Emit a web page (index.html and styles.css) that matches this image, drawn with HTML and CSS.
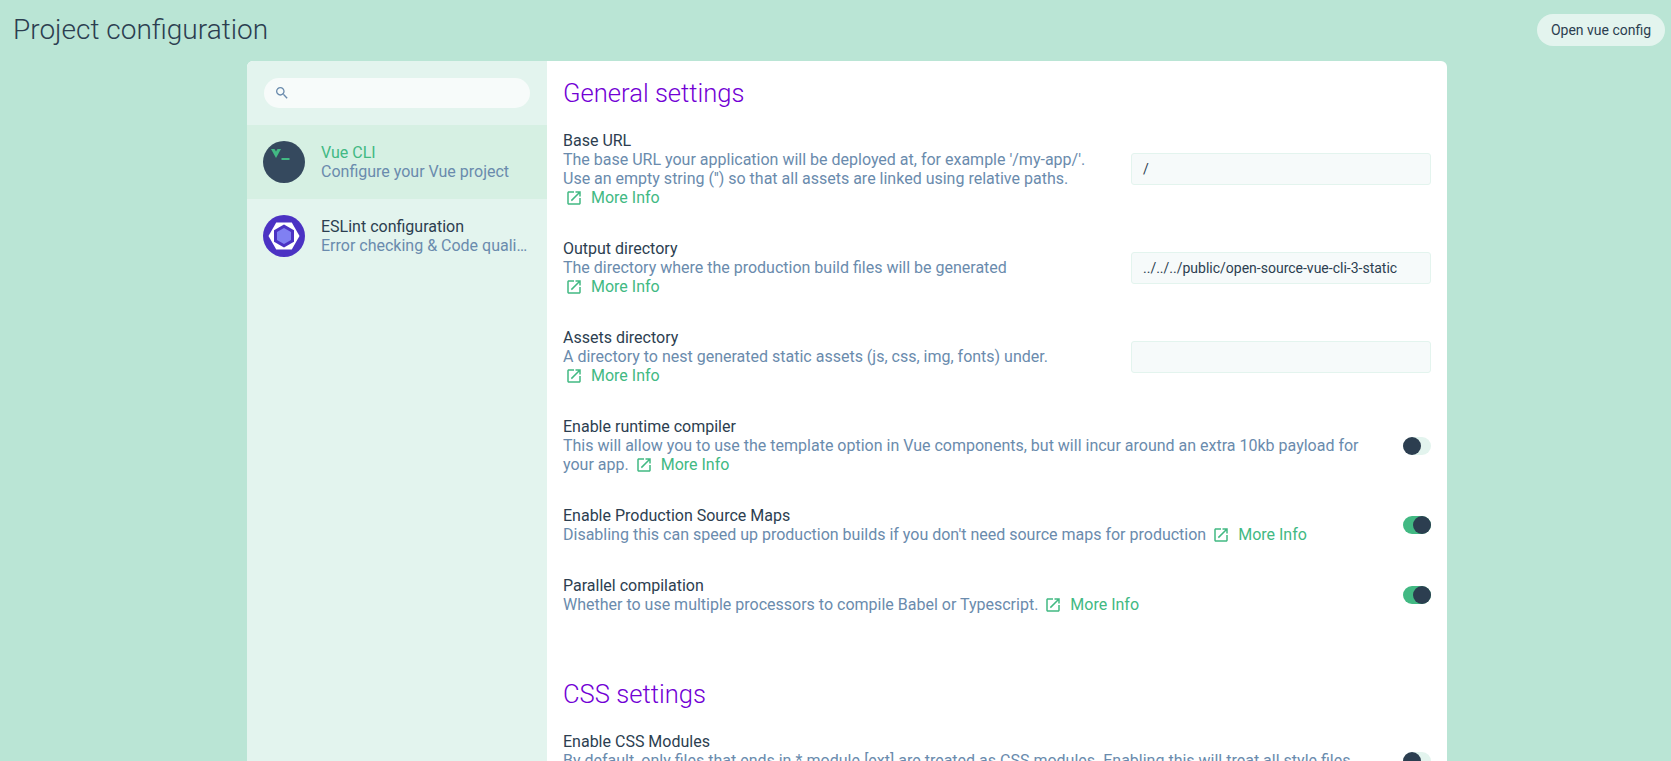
FILE: index.html
```html
<!DOCTYPE html>
<html lang="en">
<head>
    <meta charset="UTF-8">
    <title>Project configuration</title>
    <link rel="stylesheet" href="styles.css">
</head>
<body>

    <header class="top-bar">
        <h1 class="page-title">Project configuration</h1>
        <button class="btn-config">Open vue config</button>
    </header>

    <div class="panel">
        <aside class="sidebar">
            <div class="search-wrap">
                <div class="search">
                    <svg class="search-icon" viewBox="0 0 24 24"><path d="M15.5 14h-.79l-.28-.27C15.41 12.59 16 11.11 16 9.5 16 5.91 13.09 3 9.5 3S3 5.91 3 9.5 5.91 16 9.5 16c1.61 0 3.09-.59 4.23-1.57l.27.28v.79l5 4.99L20.49 19l-4.99-5zm-6 0C7.01 14 5 11.99 5 9.5S7.01 5 9.5 5 14 7.01 14 9.5 11.99 14 9.5 14z"/></svg>
                </div>
            </div>

            <div class="task selected">
                <svg class="avatar" viewBox="0 0 42 42">
                    <circle cx="21" cy="21" r="21" fill="#35495e"/>
                    <path d="M8 8h10l-5 9z" fill="#42b983"/>
                    <path d="M11.500 8h3l-1.500 2.500z" fill="#35495e"/>
                    <rect x="18.500" y="17" width="8" height="2" fill="#42b983"/>
                </svg>
                <div class="task-text">
                    <div class="task-name">Vue CLI</div>
                    <div class="task-desc">Configure your Vue project</div>
                </div>
            </div>

            <div class="task">
                <svg class="avatar" viewBox="0 0 42 42">
                    <circle cx="21" cy="21" r="21" fill="#4b32c3"/>
                    <path d="M5.500 21l7.750-13.500h15.500l7.750 13.500-7.750 13.500h-15.500z" fill="#fff"/>
                    <path d="M21 9.500l10 5.750v11.500l-10 5.750-10-5.750v-11.500z" fill="#4b32c3"/>
                    <path d="M21 13l7 4v8l-7 4-7-4v-8z" fill="#8080f2"/>
                </svg>
                <div class="task-text">
                    <div class="task-name">ESLint configuration</div>
                    <div class="task-desc">Error checking &amp; Code quality</div>
                </div>
            </div>
        </aside>

        <main class="content">
            <h2 class="section-title">General settings</h2>

            <div class="row">
                <div class="info info-narrow">
                    <div class="label">Base URL</div>
                    <div class="desc">The base URL your application will be deployed at, for example '/my-app/'.<br>Use an empty string ('') so that all assets are linked using relative paths.
                        <a class="more"><svg viewBox="0 0 24 24"><path d="M19 19H5V5h7V3H5c-1.110 0-2 .9-2 2v14c0 1.100.89 2 2 2h14c1.100 0 2-.9 2-2v-7h-2v7zM14 3v2h3.590l-9.830 9.830 1.410 1.410L19 6.410V10h2V3h-7z"/></svg>More Info</a>
                    </div>
                </div>
                <div class="field">/</div>
            </div>

            <div class="row">
                <div class="info info-narrow">
                    <div class="label">Output directory</div>
                    <div class="desc">The directory where the production build files will be generated
                        <a class="more"><svg viewBox="0 0 24 24"><path d="M19 19H5V5h7V3H5c-1.110 0-2 .9-2 2v14c0 1.100.89 2 2 2h14c1.100 0 2-.9 2-2v-7h-2v7zM14 3v2h3.590l-9.830 9.830 1.410 1.410L19 6.410V10h2V3h-7z"/></svg>More Info</a>
                    </div>
                </div>
                <div class="field">../../../public/open-source-vue-cli-3-static</div>
            </div>

            <div class="row">
                <div class="info info-narrow">
                    <div class="label">Assets directory</div>
                    <div class="desc">A directory to nest generated static assets (js, css, img, fonts) under.
                        <a class="more"><svg viewBox="0 0 24 24"><path d="M19 19H5V5h7V3H5c-1.110 0-2 .9-2 2v14c0 1.100.89 2 2 2h14c1.100 0 2-.9 2-2v-7h-2v7zM14 3v2h3.590l-9.830 9.830 1.410 1.410L19 6.410V10h2V3h-7z"/></svg>More Info</a>
                    </div>
                </div>
                <div class="field"></div>
            </div>

            <div class="row">
                <div class="info">
                    <div class="label">Enable runtime compiler</div>
                    <div class="desc">This will allow you to use the template option in Vue components, but will incur around an extra 10kb payload for your app.
                        <a class="more"><svg viewBox="0 0 24 24"><path d="M19 19H5V5h7V3H5c-1.110 0-2 .9-2 2v14c0 1.100.89 2 2 2h14c1.100 0 2-.9 2-2v-7h-2v7zM14 3v2h3.590l-9.830 9.830 1.410 1.410L19 6.410V10h2V3h-7z"/></svg>More Info</a>
                    </div>
                </div>
                <div class="toggle"></div>
            </div>

            <div class="row">
                <div class="info">
                    <div class="label">Enable Production Source Maps</div>
                    <div class="desc">Disabling this can speed up production builds if you don't need source maps for production
                        <a class="more"><svg viewBox="0 0 24 24"><path d="M19 19H5V5h7V3H5c-1.110 0-2 .9-2 2v14c0 1.100.89 2 2 2h14c1.100 0 2-.9 2-2v-7h-2v7zM14 3v2h3.590l-9.830 9.830 1.410 1.410L19 6.410V10h2V3h-7z"/></svg>More Info</a>
                    </div>
                </div>
                <div class="toggle on"></div>
            </div>

            <div class="row">
                <div class="info">
                    <div class="label">Parallel compilation</div>
                    <div class="desc">Whether to use multiple processors to compile Babel or Typescript.
                        <a class="more"><svg viewBox="0 0 24 24"><path d="M19 19H5V5h7V3H5c-1.110 0-2 .9-2 2v14c0 1.100.89 2 2 2h14c1.100 0 2-.9 2-2v-7h-2v7zM14 3v2h3.590l-9.830 9.830 1.410 1.410L19 6.410V10h2V3h-7z"/></svg>More Info</a>
                    </div>
                </div>
                <div class="toggle on"></div>
            </div>

            <h2 class="section-title second">CSS settings</h2>

            <div class="row">
                <div class="info">
                    <div class="label">Enable CSS Modules</div>
                    <div class="desc">By default, only files that ends in *.module.[ext] are treated as CSS modules. Enabling this will treat all style files as CSS modules.</div>
                </div>
                <div class="toggle"></div>
            </div>
        </main>
    </div>

</body>
</html>
```

FILE: styles.css
```css
* {
    box-sizing: border-box;
}
html, body {
    height: 100%;
}
body {
    margin: 0;
    background-color: #bae5d5;
    color: #2c3e50;
    font-family: Roboto, sans-serif;
    font-size: 16px;
    line-height: 19px;
    overflow: hidden;
}
.top-bar {
    height: 61px;
    display: flex;
    align-items: center;
    justify-content: space-between;
    padding: 0 6px 2px 13px;
}
.page-title {
    margin: 0;
    font-size: 28px;
    font-weight: 300;
    line-height: 36px;
    color: #2c3e50;
}
.btn-config {
    width: 128px;
    height: 32px;
    border: none;
    border-radius: 16px;
    background-color: #e3f4ee;
    color: #2c3e50;
    font-family: Roboto, sans-serif;
    font-size: 14px;
    padding: 0;
}
.panel {
    width: 1200px;
    height: 700px;
    margin-left: 247px;
    display: flex;
    background-color: #fff;
    border-radius: 6px 6px 0 0;
    overflow: hidden;
}
.sidebar {
    width: 300px;
    flex: none;
    background-color: #e3f4ee;
}
.search-wrap {
    height: 64px;
    padding: 17px;
}
.search {
    height: 30px;
    border-radius: 15px;
    background-color: #f7fbfa;
    display: flex;
    align-items: center;
    padding-left: 10px;
}
.search-icon {
    width: 16px;
    height: 16px;
    fill: #6a8bad;
}
.task {
    height: 74px;
    display: flex;
    align-items: center;
    gap: 16px;
    padding: 0 16px;
}
.task.selected {
    background-color: #d6f0e3;
}
.task.selected .task-name {
    color: #42b983;
}
.avatar {
    width: 42px;
    height: 42px;
    flex: none;
}
.task-text {
    min-width: 0;
    flex: 1;
    padding-right: 2px;
}
.task-name {
    color: #2c3e50;
}
.task-desc {
    color: #6a8bad;
    white-space: nowrap;
    overflow: hidden;
    text-overflow: ellipsis;
}
.content {
    flex: 1;
    padding: 17px 16px 0;
}
.section-title {
    margin: 0 0 23px;
    font-size: 25.6px;
    font-weight: 300;
    line-height: 30px;
    color: #7200d5;
}
.section-title.second {
    margin-top: 33px;
}
.row {
    display: flex;
    align-items: center;
    justify-content: space-between;
    padding-bottom: 32px;
}
.info {
    max-width: 800px;
}
.info-narrow {
    max-width: 530px;
}
.desc {
    color: #6a8bad;
}
.more {
    display: inline-flex;
    align-items: center;
    gap: 8px;
    color: #42b983;
    vertical-align: top;
    height: 19px;
    margin-left: 2px;
}
.more svg {
    width: 18px;
    height: 18px;
    fill: #42b983;
}
.field {
    width: 300px;
    height: 32px;
    flex: none;
    padding: 0 11px;
    border: 1px solid #e3f4ee;
    border-radius: 3px;
    background-color: #f6fafa;
    color: #2c3e50;
    font-size: 14px;
    line-height: 30px;
}
.toggle {
    width: 28px;
    height: 18px;
    flex: none;
    display: flex;
    border-radius: 9px;
    background-color: #e3f4ee;
}
.toggle::after {
    content: "";
    width: 18px;
    height: 18px;
    border-radius: 50%;
    background-color: #2c3e50;
}
.toggle.on {
    background-color: #42b983;
    justify-content: flex-end;
}
```
